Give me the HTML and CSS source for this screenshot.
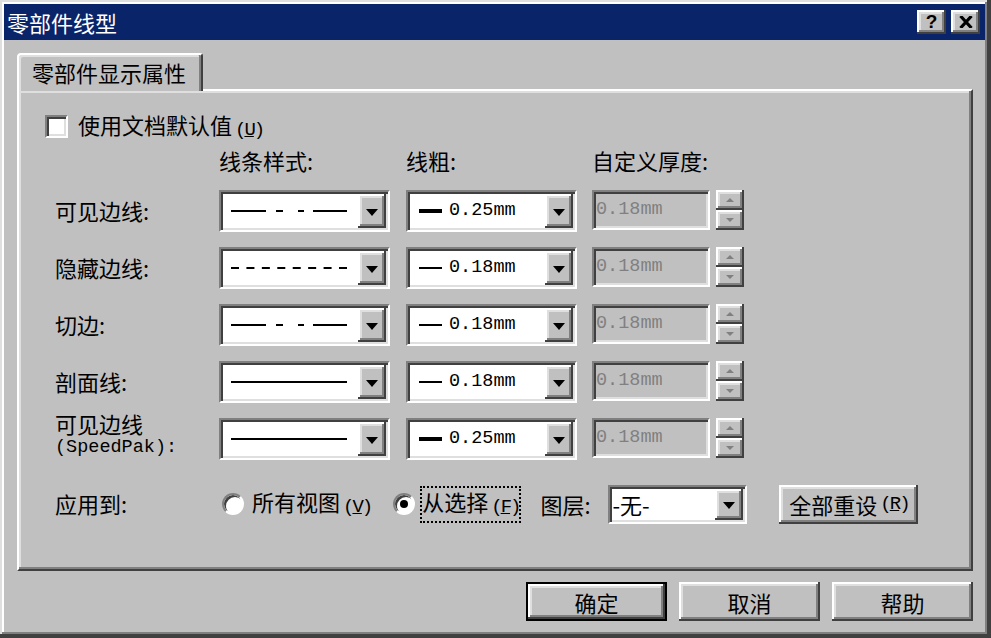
FILE: index.html
```html
<!DOCTYPE html>
<html lang="zh-CN">
<head>
    <meta charset="UTF-8">
    <meta name="viewport" content="width=device-width, initial-scale=1.0">
    <title>零部件线型</title>
    <link rel="stylesheet" href="styles.css">
</head>
<body>
    <div class="dialog">
        <div class="title-bar">
            <span class="title-text">零部件线型</span>
            <div class="caption-buttons">
                <span class="caption-btn raised">?</span>
                <span class="caption-btn raised">
                    <svg width="14" height="12" viewBox="0 0 14 12"><path d="M1.5 0 L12.5 12 M12.5 0 L1.5 12" stroke="#000" stroke-width="3.2"/></svg>
                </span>
            </div>
        </div>

        <div class="dialog-body">
            <div class="tabs">
                <div class="tab">零部件显示属性</div>
            </div>

            <div class="tab-panel">
                <div class="check-row">
                    <span class="checkbox sunken"></span>
                    <span>使用文档默认值<span class="key">(<u>U</u>)</span></span>
                </div>

                <div class="props-grid">
                    <div></div>
                    <div class="col-head">线条样式:</div>
                    <div class="col-head">线粗:</div>
                    <div class="col-head">自定义厚度:</div>

                    <!-- 可见边线 -->
                    <div class="row-label">可见边线:</div>
                    <div class="combo sunken">
                        <div class="combo-value">
                            <svg width="116" height="4"><path d="M0 2 H35 M45 2 H52 M67 2 H73 M82 2 H116" stroke="#000" stroke-width="2"/></svg>
                        </div>
                        <span class="drop-btn raised"><i class="tri"></i></span>
                    </div>
                    <div class="combo sunken">
                        <div class="combo-value">
                            <span class="weight-line thick"></span><span class="mono">0.25mm</span>
                        </div>
                        <span class="drop-btn raised"><i class="tri"></i></span>
                    </div>
                    <div class="thickness">
                        <div class="field sunken mono">0.18mm</div>
                        <div class="spinner">
                            <span class="spin-btn raised"><i class="spin-up"></i></span>
                            <span class="spin-btn raised"><i class="spin-down"></i></span>
                        </div>
                    </div>

                    <!-- 隐藏边线 -->
                    <div class="row-label">隐藏边线:</div>
                    <div class="combo sunken">
                        <div class="combo-value">
                            <svg width="116" height="4"><path d="M0 2 H116" stroke="#000" stroke-width="2" stroke-dasharray="8 7.43"/></svg>
                        </div>
                        <span class="drop-btn raised"><i class="tri"></i></span>
                    </div>
                    <div class="combo sunken">
                        <div class="combo-value">
                            <span class="weight-line"></span><span class="mono">0.18mm</span>
                        </div>
                        <span class="drop-btn raised"><i class="tri"></i></span>
                    </div>
                    <div class="thickness">
                        <div class="field sunken mono">0.18mm</div>
                        <div class="spinner">
                            <span class="spin-btn raised"><i class="spin-up"></i></span>
                            <span class="spin-btn raised"><i class="spin-down"></i></span>
                        </div>
                    </div>

                    <!-- 切边 -->
                    <div class="row-label">切边:</div>
                    <div class="combo sunken">
                        <div class="combo-value">
                            <svg width="116" height="4"><path d="M0 2 H35 M45 2 H52 M67 2 H73 M82 2 H116" stroke="#000" stroke-width="2"/></svg>
                        </div>
                        <span class="drop-btn raised"><i class="tri"></i></span>
                    </div>
                    <div class="combo sunken">
                        <div class="combo-value">
                            <span class="weight-line"></span><span class="mono">0.18mm</span>
                        </div>
                        <span class="drop-btn raised"><i class="tri"></i></span>
                    </div>
                    <div class="thickness">
                        <div class="field sunken mono">0.18mm</div>
                        <div class="spinner">
                            <span class="spin-btn raised"><i class="spin-up"></i></span>
                            <span class="spin-btn raised"><i class="spin-down"></i></span>
                        </div>
                    </div>

                    <!-- 剖面线 -->
                    <div class="row-label">剖面线:</div>
                    <div class="combo sunken">
                        <div class="combo-value">
                            <svg width="116" height="4"><path d="M0 2 H116" stroke="#000" stroke-width="2"/></svg>
                        </div>
                        <span class="drop-btn raised"><i class="tri"></i></span>
                    </div>
                    <div class="combo sunken">
                        <div class="combo-value">
                            <span class="weight-line"></span><span class="mono">0.18mm</span>
                        </div>
                        <span class="drop-btn raised"><i class="tri"></i></span>
                    </div>
                    <div class="thickness">
                        <div class="field sunken mono">0.18mm</div>
                        <div class="spinner">
                            <span class="spin-btn raised"><i class="spin-up"></i></span>
                            <span class="spin-btn raised"><i class="spin-down"></i></span>
                        </div>
                    </div>

                    <!-- SpeedPak -->
                    <div class="row-label two-line">
                        <div class="label-main">可见边线</div>
                        <div class="mono label-sub">(SpeedPak):</div>
                    </div>
                    <div class="combo sunken">
                        <div class="combo-value">
                            <svg width="116" height="4"><path d="M0 2 H116" stroke="#000" stroke-width="2"/></svg>
                        </div>
                        <span class="drop-btn raised"><i class="tri"></i></span>
                    </div>
                    <div class="combo sunken">
                        <div class="combo-value">
                            <span class="weight-line thick"></span><span class="mono">0.25mm</span>
                        </div>
                        <span class="drop-btn raised"><i class="tri"></i></span>
                    </div>
                    <div class="thickness">
                        <div class="field sunken mono">0.18mm</div>
                        <div class="spinner">
                            <span class="spin-btn raised"><i class="spin-up"></i></span>
                            <span class="spin-btn raised"><i class="spin-down"></i></span>
                        </div>
                    </div>
                </div>

                <div class="apply-row">
                    <span class="apply-label">应用到:</span>
                    <span class="radio"></span>
                    <span class="radio-text">所有视图<span class="key">(<u>V</u>)</span></span>
                    <span class="radio checked"></span>
                    <span class="radio-text focus">从选择<span class="key">(<u>F</u>)</span></span>
                    <span class="layer-label">图层:</span>
                    <div class="combo sunken layer-combo">
                        <div class="combo-value">-无-</div>
                        <span class="drop-btn raised"><i class="tri"></i></span>
                    </div>
                    <span class="button raised reset-btn">全部重设<span class="key">(<u>R</u>)</span></span>
                </div>
            </div>

            <div class="button-row">
                <span class="button raised default">确定</span>
                <span class="button raised">取消</span>
                <span class="button raised">帮助</span>
            </div>
        </div>
    </div>
</body>
</html>
```

FILE: styles.css
```css
* {
    margin: 0;
    padding: 0;
    box-sizing: border-box;
}

html, body {
    width: 991px;
    height: 638px;
    overflow: hidden;
}

body {
    font-family: "Noto Sans CJK SC", "Noto Sans", sans-serif;
    font-size: 22px;
    line-height: 22px;
    color: #000000;
    background: #c0c0c0;
}

.mono {
    font-family: "Liberation Mono", "DejaVu Sans Mono", monospace;
    font-size: 18.5px;
}

.key {
    font-family: "Liberation Mono", "DejaVu Sans Mono", monospace;
    font-size: 19px;
    letter-spacing: -2px;
    margin-left: 3px;
    vertical-align: -1px;
}

/* 3D borders */
.raised {
    background: #c0c0c0;
    box-shadow: inset -2px -2px 0 #404040, inset 2px 2px 0 #ffffff,
                inset -4px -4px 0 #808080, inset 4px 4px 0 #dfdfdf;
}

.sunken {
    border: 2px solid;
    border-color: #808080 #ffffff #ffffff #808080;
    box-shadow: inset 2px 2px 0 #404040, inset -2px -2px 0 #dfdfdf;
}

.dialog {
    width: 991px;
    height: 638px;
    display: flex;
    flex-direction: column;
    padding: 4px 6px 4px 4px;
    background: #c0c0c0;
    box-shadow: inset -4px -4px 0 #404040, inset 2px 2px 0 #dfdfdf,
                inset -6px -6px 0 #808080, inset 4px 4px 0 #ffffff;
}

.title-bar {
    height: 36px;
    background: #0a246a;
    color: #ffffff;
    display: flex;
    align-items: center;
    justify-content: space-between;
    padding: 0 5px 0 3px;
}

.title-text {
    font-size: 22px;
}

.caption-buttons {
    display: flex;
    gap: 5px;
}

.caption-btn {
    width: 29px;
    height: 24px;
    display: flex;
    align-items: center;
    justify-content: center;
    color: #000000;
    font-family: "Liberation Sans", Arial, sans-serif;
    font-weight: bold;
    font-size: 19px;
}

.dialog-body {
    flex: 1;
    display: flex;
    flex-direction: column;
    padding: 13px 12px 0 13px;
}

.tabs {
    display: flex;
}

.tab {
    position: relative;
    z-index: 1;
    height: 38px;
    margin-bottom: -2px;
    padding: 6px 15px 0 13px;
    background: #c0c0c0;
    border-top: 2px solid #ffffff;
    border-left: 2px solid #ffffff;
    border-right: 2px solid #404040;
    border-radius: 4px 3px 0 0;
    box-shadow: inset -2px 0 0 #808080, inset 2px 2px 0 #dfdfdf;
}

.tab-panel {
    flex: 1;
    border: 2px solid;
    border-color: #ffffff #404040 #404040 #ffffff;
    box-shadow: inset -2px -2px 0 #808080, inset 2px 2px 0 #dfdfdf;
    padding: 24px 0 0 26px;
}

.check-row {
    display: flex;
    align-items: center;
    gap: 10px;
    height: 23px;
}

.checkbox {
    width: 23px;
    height: 23px;
    background: #ffffff;
}

.props-grid {
    display: grid;
    grid-template-columns: 164px 187px 186px auto;
    row-gap: 15px;
    margin: 11px 0 0 10px;
}

.col-head {
    margin-bottom: 4px;
}

.row-label {
    align-self: center;
    padding-bottom: 3px;
}

.row-label.two-line {
    align-self: start;
    height: 42px;
    margin-top: -4px;
    padding-bottom: 0;
    line-height: 22px;
}

.label-main {
    margin-top: -2px;
}

.label-sub {
    line-height: 20px;
    margin-top: 4px;
}

.combo {
    width: 171px;
    height: 42px;
    background: #ffffff;
    display: flex;
}

.combo-value {
    flex: 1;
    display: flex;
    align-items: center;
    padding-left: 10px;
}

.combo-value svg {
    display: block;
}

.drop-btn {
    width: 28px;
    display: flex;
    align-items: center;
    justify-content: center;
    margin: 2px 2px 2px 0;
}

.tri {
    width: 0;
    height: 0;
    border-left: 6px solid transparent;
    border-right: 6px solid transparent;
    border-top: 7px solid #000000;
    margin-top: 2px;
}

.weight-line {
    width: 23px;
    height: 2px;
    background: #000000;
    margin: 0 7px 0 1px;
}

.weight-line.thick {
    height: 4px;
}

.thickness {
    display: flex;
    gap: 6px;
}

.field {
    width: 118px;
    height: 40px;
    background: #c0c0c0;
    color: #808080;
    display: flex;
    align-items: center;
    padding-left: 2px;
}

.spinner {
    display: flex;
    flex-direction: column;
    height: 40px;
}

.spin-btn {
    width: 28px;
    height: 20px;
    display: flex;
    align-items: center;
    justify-content: center;
}

.spin-up,
.spin-down {
    width: 0;
    height: 0;
    border-left: 4px solid transparent;
    border-right: 4px solid transparent;
}

.spin-up {
    border-bottom: 4px solid #808080;
}

.spin-down {
    border-top: 4px solid #808080;
}

.apply-row {
    display: flex;
    align-items: center;
    height: 40px;
    margin: 24px 0 0 10px;
}

.apply-label {
    width: 167px;
    padding-bottom: 3px;
}

.radio {
    flex-shrink: 0;
    width: 22px;
    height: 22px;
    border-radius: 50%;
    border: 2px solid;
    border-color: #808080 #ffffff #ffffff #808080;
    background: #ffffff;
    box-shadow: inset 2px 2px 0 #404040;
    display: flex;
    align-items: center;
    justify-content: center;
}

.radio.checked::after {
    content: "";
    width: 8px;
    height: 8px;
    border-radius: 50%;
    background: #000000;
}

.radio-text {
    margin: 0 19px 0 4px;
    padding: 2px 1px 3px 2px;
    border: 2px solid transparent;
}

.radio-text.focus {
    border: 2px dotted #000000;
    margin: 0 19px 0 5px;
    padding: 2px 0 3px 0;
}

.layer-label {
    width: 68px;
    flex-shrink: 0;
}

.layer-combo {
    width: 139px;
    height: 39px;
    flex-shrink: 0;
}

.layer-combo .combo-value {
    padding-left: 2px;
}

.button {
    width: 141px;
    height: 39px;
    display: flex;
    align-items: center;
    justify-content: center;
}

.reset-btn {
    width: 139px;
    margin-left: 32px;
}

.button.default {
    border: 2px solid #000000;
}

.button-row {
    height: 63px;
    display: flex;
    justify-content: flex-end;
    align-items: flex-start;
    gap: 12px;
    padding-top: 11px;
}
```
